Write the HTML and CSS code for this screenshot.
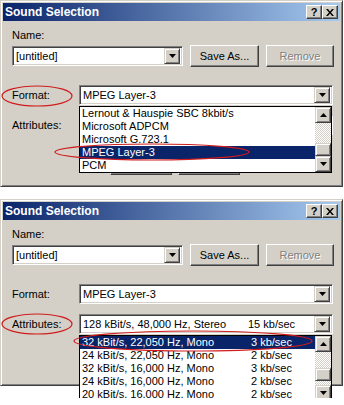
FILE: index.html
```html
<!DOCTYPE html>
<html lang="en">
<head>
    <meta charset="UTF-8">
    <meta name="viewport" content="width=device-width, initial-scale=1.0">
    <title>Sound Selection</title>
    <link rel="stylesheet" href="styles.css">
</head>
<body>
    <!-- Окно 1: открыт список форматов -->
    <div class="window">
        <div class="titlebar">
            <span class="title">Sound Selection</span>
            <span class="caption-btns">
                <span class="cbtn help">?</span>
                <span class="cbtn"><svg width="8" height="7" viewBox="0 0 8 7"><path d="M0 0h2l2 2.5L6 0h2L5 3.5 8 7H6L4 4.5 2 7H0l3-3.5z" fill="#000"/></svg></span>
            </span>
        </div>
        <div class="content">
            <div class="label">Name:</div>
            <div class="row name-row">
                <div class="combo name-combo">
                    <span class="value">[untitled]</span>
                    <span class="drop"><svg width="7" height="4" viewBox="0 0 7 4"><path d="M0 0h7L3.5 4z" fill="#000"/></svg></span>
                </div>
                <button class="btn save">Save As...</button>
                <button class="btn remove" disabled>Remove</button>
            </div>
            <div class="row field format-row">
                <span class="label">Format:</span>
                <div class="combo wide">
                    <span class="value">MPEG Layer-3</span>
                    <span class="drop"><svg width="7" height="4" viewBox="0 0 7 4"><path d="M0 0h7L3.5 4z" fill="#000"/></svg></span>
                </div>
            </div>
            <div class="row field attr-row">
                <span class="label">Attributes:</span>
                <!-- под списком, не видно -->
                <div class="combo wide">
                    <span class="value"></span>
                    <span class="drop"></span>
                </div>
            </div>
            <div class="row actions">
                <button class="btn ok"></button>
                <button class="btn cancel"></button>
            </div>
        </div>
        <div class="droplist format-list">
            <ul class="items">
                <li>Lernout &amp; Hauspie SBC 8kbit/s</li>
                <li>Microsoft ADPCM</li>
                <li>Microsoft G.723.1</li>
                <li class="selected">MPEG Layer-3</li>
                <li>PCM</li>
            </ul>
            <div class="scrollbar">
                <span class="sbtn"><svg width="7" height="4" viewBox="0 0 7 4"><path d="M0 4h7L3.5 0z" fill="#000"/></svg></span>
                <span class="track top-1"></span>
                <span class="thumb"></span>
                <span class="track bottom-1"></span>
                <span class="sbtn"><svg width="7" height="4" viewBox="0 0 7 4"><path d="M0 0h7L3.5 4z" fill="#000"/></svg></span>
            </div>
        </div>
        <svg class="marks" width="343" height="187">
            <ellipse cx="37" cy="96" rx="35" ry="10"/>
            <ellipse cx="152" cy="152" rx="97" ry="8"/>
        </svg>
    </div>

    <!-- Окно 2: открыт список атрибутов -->
    <div class="window">
        <div class="titlebar">
            <span class="title">Sound Selection</span>
            <span class="caption-btns">
                <span class="cbtn help">?</span>
                <span class="cbtn"><svg width="8" height="7" viewBox="0 0 8 7"><path d="M0 0h2l2 2.5L6 0h2L5 3.5 8 7H6L4 4.5 2 7H0l3-3.5z" fill="#000"/></svg></span>
            </span>
        </div>
        <div class="content">
            <div class="label">Name:</div>
            <div class="row name-row">
                <div class="combo name-combo">
                    <span class="value">[untitled]</span>
                    <span class="drop"><svg width="7" height="4" viewBox="0 0 7 4"><path d="M0 0h7L3.5 4z" fill="#000"/></svg></span>
                </div>
                <button class="btn save">Save As...</button>
                <button class="btn remove" disabled>Remove</button>
            </div>
            <div class="row field format-row">
                <span class="label">Format:</span>
                <div class="combo wide">
                    <span class="value">MPEG Layer-3</span>
                    <span class="drop"><svg width="7" height="4" viewBox="0 0 7 4"><path d="M0 0h7L3.5 4z" fill="#000"/></svg></span>
                </div>
            </div>
            <div class="row field attr-row">
                <span class="label">Attributes:</span>
                <div class="combo wide">
                    <span class="value">128 kBit/s, 48,000 Hz, Stereo</span>
                    <span class="value rate">15 kb/sec</span>
                    <span class="drop"><svg width="7" height="4" viewBox="0 0 7 4"><path d="M0 0h7L3.5 4z" fill="#000"/></svg></span>
                </div>
            </div>
            <div class="row actions">
                <button class="btn ok"></button>
                <button class="btn cancel"></button>
            </div>
        </div>
        <div class="droplist attr-list">
            <ul class="items">
                <li class="selected"><span class="col">32 kBit/s, 22,050 Hz, Mono</span><span>3 kb/sec</span></li>
                <li><span class="col">24 kBit/s, 22,050 Hz, Mono</span><span>2 kb/sec</span></li>
                <li><span class="col">32 kBit/s, 16,000 Hz, Mono</span><span>3 kb/sec</span></li>
                <li><span class="col">24 kBit/s, 16,000 Hz, Mono</span><span>2 kb/sec</span></li>
                <li><span class="col">20 kBit/s, 16,000 Hz, Mono</span><span>2 kb/sec</span></li>
            </ul>
            <div class="scrollbar">
                <span class="sbtn"><svg width="7" height="4" viewBox="0 0 7 4"><path d="M0 4h7L3.5 0z" fill="#000"/></svg></span>
                <span class="track top-2"></span>
                <span class="thumb"></span>
                <span class="track bottom-2"></span>
                <span class="sbtn"><svg width="7" height="4" viewBox="0 0 7 4"><path d="M0 0h7L3.5 4z" fill="#000"/></svg></span>
            </div>
        </div>
        <svg class="marks" width="343" height="187">
            <ellipse cx="37" cy="125" rx="35" ry="10"/>
            <ellipse cx="193" cy="142" rx="119" ry="10"/>
        </svg>
    </div>
</body>
</html>
```

FILE: styles.css
```css
body {
    margin: 0;
    padding: 0;
    background: #fff;
    font-family: "Liberation Sans", Arial, sans-serif;
    font-size: 11px;
    color: #000;
}
.window {
    position: relative;
    box-sizing: border-box;
    width: 343px;
    height: 187px;
    margin-bottom: 12px;
    padding: 2px;
    background: #d4d0c8;
    border: 1px solid;
    border-color: #d4d0c8 #404040 #404040 #d4d0c8;
    box-shadow: inset 1px 1px #fff, inset -1px -1px #808080;
}
.titlebar {
    display: flex;
    align-items: center;
    justify-content: space-between;
    height: 18px;
    padding: 0 2px;
    background: linear-gradient(to right, #0a246a, #a6caf0);
}
.title {
    color: #fff;
    font-weight: bold;
    font-size: 12px;
}
.caption-btns {
    display: flex;
}
.cbtn {
    display: flex;
    align-items: center;
    justify-content: center;
    box-sizing: border-box;
    width: 16px;
    height: 14px;
    background: #d4d0c8;
    border: 1px solid;
    border-color: #fff #404040 #404040 #fff;
    box-shadow: inset -1px -1px #808080;
}
.cbtn.help {
    font-weight: bold;
    font-size: 11px;
    line-height: 12px;
}
.content {
    padding: 8px 0 0 9px;
}
.label {
    line-height: 13px;
}
.row {
    display: flex;
    align-items: center;
}
.name-row {
    height: 22px;
    margin-top: 3px;
    gap: 7px;
}
.field .label {
    width: 67px;
}
.format-row {
    margin-top: 18px;
}
.attr-row {
    margin-top: 10px;
}
.combo {
    display: flex;
    align-items: center;
    box-sizing: border-box;
    height: 20px;
    padding: 2px;
    background: #fff;
    border: 1px solid;
    border-color: #808080 #fff #fff #808080;
    box-shadow: inset 1px 1px #404040, inset -1px -1px #d4d0c8;
}
.combo .value {
    flex: 1;
    padding-left: 1px;
    white-space: nowrap;
}
.combo .rate {
    flex: 0 0 66px;
}
.name-combo {
    width: 171px;
}
.wide {
    width: 254px;
}
.drop,
.sbtn {
    display: flex;
    align-items: center;
    justify-content: center;
    box-sizing: border-box;
    width: 16px;
    height: 16px;
    background: #d4d0c8;
    border: 1px solid;
    border-color: #d4d0c8 #404040 #404040 #d4d0c8;
    box-shadow: inset 1px 1px #fff, inset -1px -1px #808080;
}
.btn {
    box-sizing: border-box;
    height: 22px;
    padding: 0;
    font-family: inherit;
    font-size: 11px;
    color: #000;
    background: #d4d0c8;
    border: 1px solid;
    border-color: #fff #404040 #404040 #fff;
    box-shadow: inset -1px -1px #808080;
}
.save {
    width: 69px;
}
.remove {
    width: 68px;
    color: #808080;
    text-shadow: 1px 1px #fff;
}
.actions {
    margin-top: 17px;
    padding-left: 98px;
    gap: 6px;
}
.actions .btn {
    width: 62px;
    height: 23px;
}
.droplist {
    position: absolute;
    left: 78px;
    display: flex;
    box-sizing: border-box;
    width: 253px;
    height: 67px;
    background: #fff;
    border: 1px solid #000;
}
.format-list {
    top: 105px;
}
.attr-list {
    top: 135px;
}
.items {
    flex: 1;
    margin: 0;
    padding: 0;
    list-style: none;
}
.items li {
    display: flex;
    height: 13px;
    line-height: 13px;
    padding-left: 2px;
    white-space: nowrap;
}
.items li.selected {
    background: #0a246a;
    color: #fff;
}
.items .col {
    width: 169px;
}
.scrollbar {
    display: flex;
    flex-direction: column;
    width: 16px;
}
.track {
    background: repeating-conic-gradient(#fff 0 25%, #d4d0c8 0 50%) 0 0 / 2px 2px;
}
.top-1 { height: 21px; }
.bottom-1 { height: 0; }
.top-2 { height: 17px; }
.bottom-2 { height: 4px; }
.thumb {
    box-sizing: border-box;
    height: 13px;
    background: #d4d0c8;
    border: 1px solid;
    border-color: #d4d0c8 #404040 #404040 #d4d0c8;
    box-shadow: inset 1px 1px #fff, inset -1px -1px #808080;
}
.marks {
    position: absolute;
    left: -1px;
    top: -1px;
    overflow: visible;
    pointer-events: none;
}
.marks ellipse {
    fill: none;
    stroke: #d01c1c;
    stroke-width: 1.2;
}
```
